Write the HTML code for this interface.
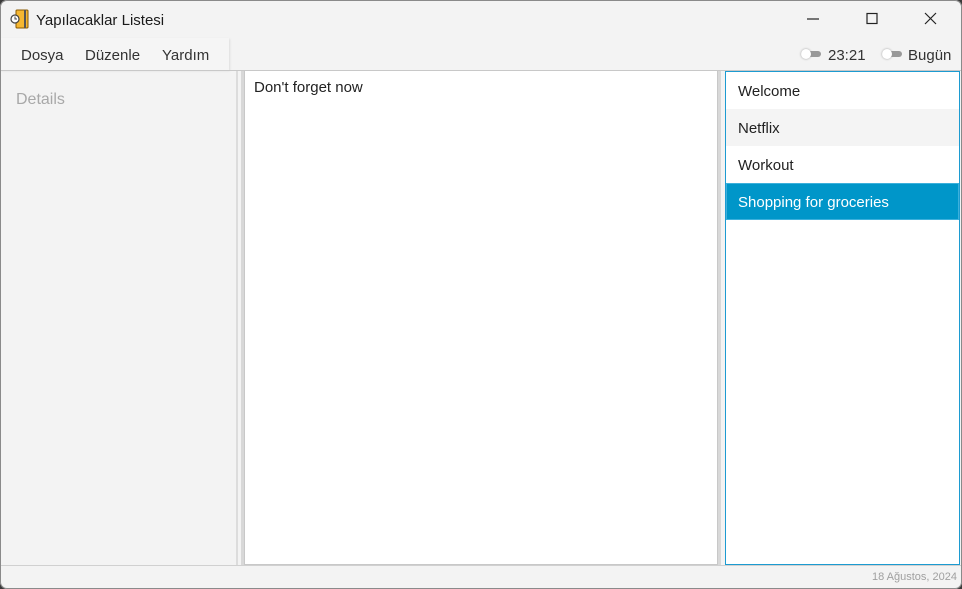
<!DOCTYPE html>
<html><head><style>
*{margin:0;padding:0;box-sizing:border-box}
body{width:962px;height:589px;background:#3a3a3a;font-family:"Liberation Sans",sans-serif;overflow:hidden;position:relative}
.win{position:absolute;left:0;top:0;width:962px;height:589px;background:#f3f3f3;border-radius:7px;overflow:hidden}
.frame{position:absolute;left:0;top:0;width:962px;height:589px;border:1px solid #8a8a8a;border-radius:7px;pointer-events:none}
.abs{position:absolute}
.t{font-size:15px;color:#1a1a1a}
</style></head><body>
<div class="win">
 <svg class="abs" style="left:10px;top:9px" width="20" height="20" viewBox="0 0 20 20">
  <rect x="6" y="1" width="12" height="18" rx="1" fill="#f5b731" stroke="#8a5a00" stroke-width="1"/>
  <rect x="14" y="1" width="2" height="18" fill="#555"/>
  <circle cx="5" cy="10" r="4" fill="#fff" stroke="#444" stroke-width="1.2"/>
  <path d="M5 7.5V10H7" stroke="#444" stroke-width="1" fill="none"/>
 </svg>
 <div class="abs t" style="left:36px;top:12px;font-size:15px">Yapılacaklar Listesi</div>
 <svg class="abs" style="left:806px;top:12px" width="140" height="14">
  <path d="M1 7H13" stroke="#222" stroke-width="1.2"/>
  <rect x="61" y="1.5" width="10" height="10" fill="none" stroke="#222" stroke-width="1.2"/>
  <path d="M119 1L130 12M130 1L119 12" stroke="#222" stroke-width="1.2"/>
 </svg>
 <div class="abs" style="left:0;top:38px;width:229px;height:32px;background:#f5f5f5;box-shadow:1px 1px 2px #ddd"></div>
 <div class="abs t" style="left:21px;top:47px;color:#333">Dosya</div>
 <div class="abs t" style="left:85px;top:47px;color:#333">Düzenle</div>
 <div class="abs t" style="left:162px;top:47px;color:#333">Yardım</div>
 <div class="abs" style="left:801px;top:51px;width:20px;height:6px;background:#999;border-radius:3px"></div>
 <div class="abs" style="left:801px;top:49px;width:10px;height:10px;background:#fff;border-radius:5px;box-shadow:0 0 2px #999"></div>
 <div class="abs t" style="left:828px;top:47px;color:#333">23:21</div>
 <div class="abs" style="left:882px;top:51px;width:20px;height:6px;background:#999;border-radius:3px"></div>
 <div class="abs" style="left:882px;top:49px;width:10px;height:10px;background:#fff;border-radius:5px;box-shadow:0 0 2px #999"></div>
 <div class="abs t" style="left:908px;top:47px;color:#333">Bugün</div>
 <div class="abs" style="left:0;top:70px;width:962px;height:1px;background:#c8c8c8"></div>
 <div class="abs" style="left:16px;top:91px;font-size:16px;color:#a8a8a8">Details</div>
 <div class="abs" style="left:236px;top:71px;width:2px;height:494px;background:#dcdcdc"></div>
 <div class="abs" style="left:241px;top:71px;width:3px;height:494px;background:#d8d8d8"></div>
 <div class="abs" style="left:244px;top:71px;width:474px;height:494px;background:#fff;border:1px solid #c8c8c8;border-top:none"></div>
 <div class="abs t" style="left:254px;top:79px;color:#222">Don't forget now</div>
 <div class="abs" style="left:718px;top:71px;width:3px;height:494px;background:#d8d8d8"></div>
 <div class="abs" style="left:725px;top:71px;width:235px;height:494px;background:#fff;border:1px solid #1c9bd1">
  <div style="height:37px;padding:11px 12px 0;font-size:15px;color:#222">Welcome</div>
  <div style="height:37px;padding:11px 12px 0;font-size:15px;color:#222;background:#f4f4f4">Netflix</div>
  <div style="height:37px;padding:11px 12px 0;font-size:15px;color:#222">Workout</div>
  <div style="height:37px;padding:10px 11px 0;font-size:15px;color:#fff;background:#0096c9;border:1px solid #3cb0dc">Shopping for groceries</div>
 </div>
 <div class="abs" style="left:0;top:565px;width:962px;height:1px;background:#d0d0d0"></div>
 <div class="abs" style="right:5px;top:571px;font-size:11px;color:#a0a0a0">18 Ağustos, 2024</div>
</div>
<div class="frame"></div>
</body></html>
